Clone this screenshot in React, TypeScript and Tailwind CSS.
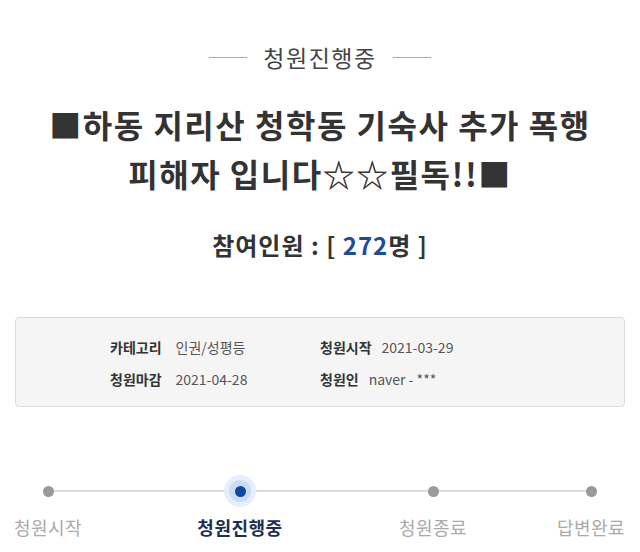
import React from "react";

const font = { fontFamily: '"Noto Sans CJK KR", "Noto Sans", sans-serif' };

function Dot({ active }: { active?: boolean }) {
  if (active) {
    return (
      <div className="flex h-[32px] w-[32px] items-center justify-center rounded-full bg-[#e6effc]">
        <div className="flex h-[22px] w-[22px] items-center justify-center rounded-full bg-[#cadcf6]">
          <div className="h-[11px] w-[11px] rounded-full bg-[#0b4aa2]" />
        </div>
      </div>
    );
  }
  return (
    <div className="flex h-[32px] w-[32px] items-center justify-center">
      <div className="h-[11px] w-[11px] rounded-full bg-[#9a9a9a]" />
    </div>
  );
}

const steps = [
  { label: "청원시작", active: false, ml: "ml-0" },
  { label: "청원진행중", active: true, ml: "ml-[96px]" },
  { label: "청원종료", active: false, ml: "ml-[97px]" },
  { label: "답변완료", active: false, ml: "ml-[62px]" },
];

export default function App() {
  return (
    <div className="h-[552px] w-[640px] overflow-hidden bg-white" style={font}>
      <div className="flex items-center justify-center pt-[40px]">
        <div className="h-px w-[38px] bg-[#aaaaaa]" />
        <div className="mx-[16px] text-[23px] leading-[34px] tracking-[1.5px] text-[#444]">청원진행중</div>
        <div className="h-px w-[38px] bg-[#aaaaaa]" />
      </div>
      <div className="mt-[26px] text-center text-[32px] font-bold leading-[49px] tracking-[1.5px] text-[#333]">
        <div>■하동 지리산 청학동 기숙사 추가 폭행</div>
        <div>피해자 입니다☆☆필독!!■</div>
      </div>
      <div className="mt-[29px] text-center text-[24px] font-bold leading-[36px] tracking-[1px] text-[#333]">
        참여인원 : [ <span className="text-[#1a4b9c]">272</span>명 ]
      </div>
      <div className="mx-[15px] mt-[54px] h-[90px] rounded-[4px] border border-[#dcdcdc] bg-[#f5f5f5] pl-[94px] pt-[13px] text-[14px] leading-[32px]">
        <div className="flex">
          <div className="flex w-[210px] gap-[14px]">
            <span className="font-bold text-[#333]">카테고리</span>
            <span className="text-[#555]">인권/성평등</span>
          </div>
          <div className="flex gap-[10px]">
            <span className="font-bold text-[#333]">청원시작</span>
            <span className="text-[#555]">2021-03-29</span>
          </div>
        </div>
        <div className="flex">
          <div className="flex w-[210px] gap-[14px]">
            <span className="font-bold text-[#333]">청원마감</span>
            <span className="text-[#555]">2021-04-28</span>
          </div>
          <div className="flex gap-[10px]">
            <span className="font-bold text-[#333]">청원인</span>
            <span className="text-[#555]">naver - ***</span>
          </div>
        </div>
      </div>
      <div className="relative mt-[68px]">
        <div className="absolute left-[48px] top-[15px] h-[2px] w-[543px] bg-[#dddddd]" />
        <div className="relative flex">
          {steps.map((s) => (
            <div key={s.label} className={`flex w-[96px] flex-col items-center ${s.ml}`}>
              <Dot active={s.active} />
              <div
                className={
                  s.active
                    ? "mt-[6px] whitespace-nowrap text-[18px] font-bold leading-[28px] tracking-[0.5px] text-[#1d2f52]"
                    : "mt-[6px] whitespace-nowrap text-[18px] leading-[28px] tracking-[0.5px] text-[#aaaaaa]"
                }
              >
                {s.label}
              </div>
            </div>
          ))}
        </div>
      </div>
    </div>
  );
}
